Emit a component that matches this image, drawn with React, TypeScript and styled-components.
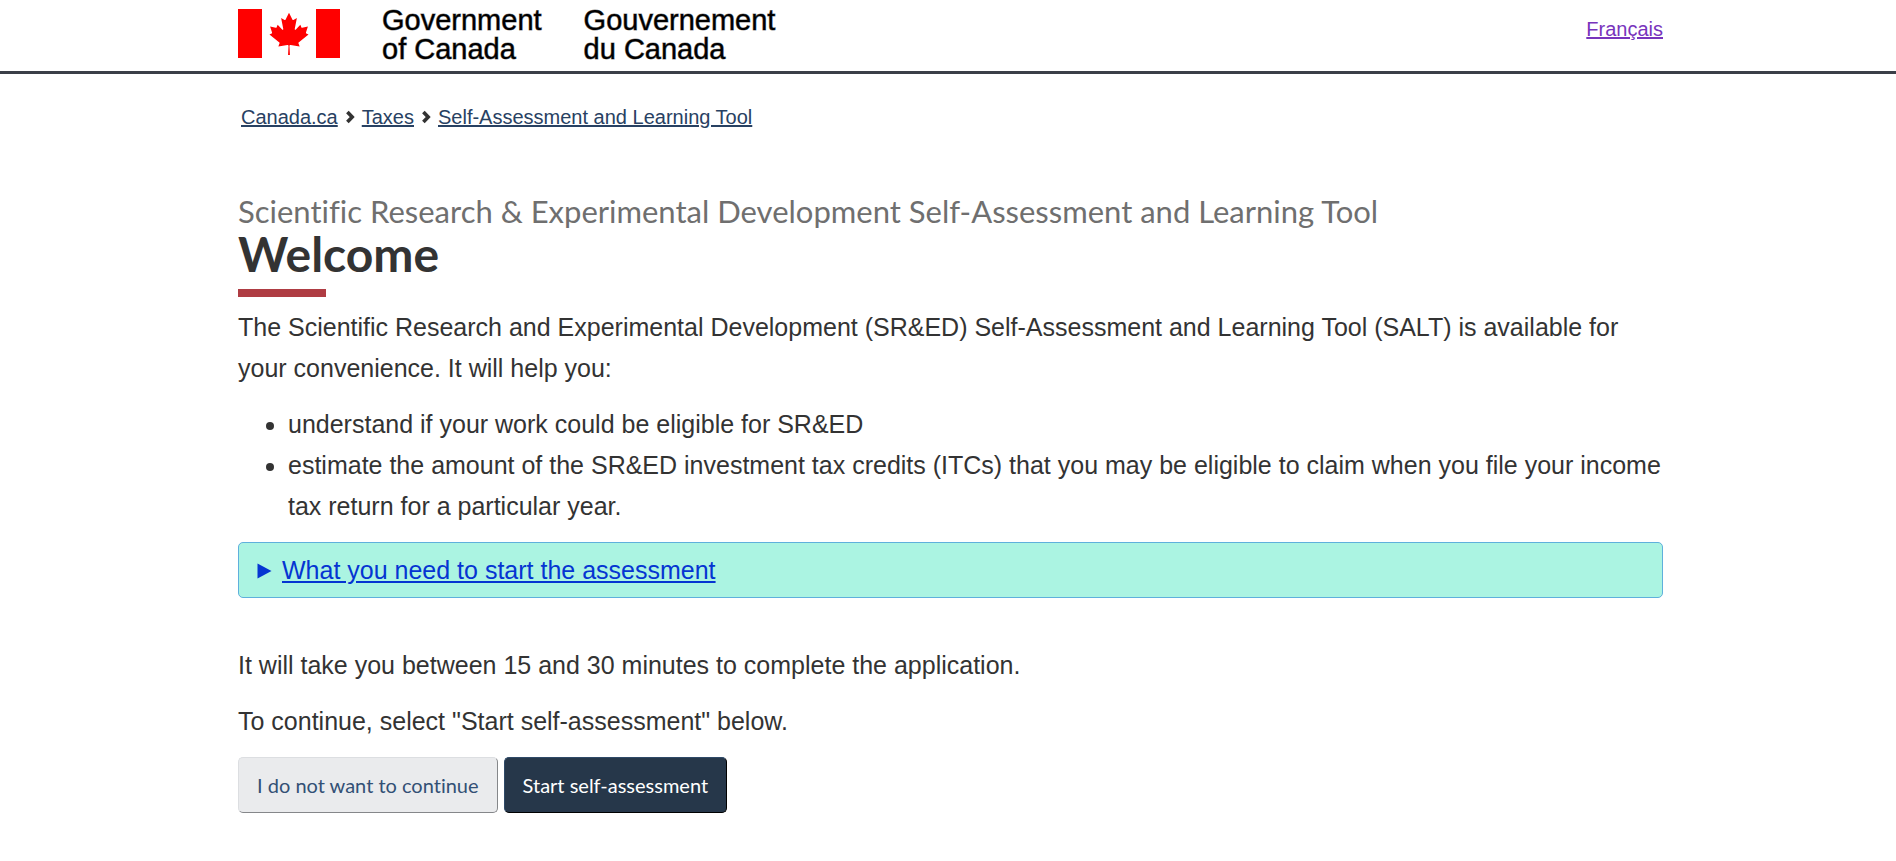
import React from "react";
import styled, { createGlobalStyle } from "styled-components";

const sans = `"Liberation Sans", Arial, Helvetica, sans-serif`;
const lato = `Lato, "Liberation Sans", sans-serif`;

const GlobalStyle = createGlobalStyle`
  *, *::before, *::after { box-sizing: border-box; }
  body {
    margin: 0;
    background: #fff;
    color: #333;
    font-family: ${sans};
    font-size: 25px;
    line-height: 41px;
  }
`;

const Page = styled.div`
  padding: 0 20px 48px 25px;
`;

const Container = styled.div`
  max-width: 1425px;
  margin: 0 auto;
`;

const Header = styled.header`
  margin: 0 -20px 0 -25px;
  padding: 0 20px 0 25px;
  border-bottom: 3px solid #3b3f48;
`;

const HeaderRow = styled(Container)`
  display: flex;
  justify-content: space-between;
  align-items: flex-start;
  padding: 6px 0 7px;
`;

const Brand = styled.a`
  display: flex;
  align-items: flex-start;
  gap: 42px;
  color: #000;
  text-decoration: none;
`;

const Flag = styled.svg`
  display: block;
  width: 102px;
  height: 49px;
  margin-top: 3px;
`;

const Wordmark = styled.span`
  font-size: 29px;
  line-height: 29px;
  -webkit-text-stroke: 1px rgba(0, 0, 0, 0.5);
`;

const LanguageLink = styled.a`
  padding-top: 11px;
  color: #7834bc;
  font-size: 20px;
  line-height: 24px;
`;

const Breadcrumb = styled.ol`
  display: flex;
  flex-wrap: wrap;
  align-items: center;
  margin: 0;
  padding: 28px 0 0 3px;
  list-style: none;
  font-size: 20px;
  line-height: 30px;
`;

const Crumb = styled.li`
  display: flex;
  align-items: center;

  a {
    color: #284162;
  }
`;

const Chevron = styled.svg`
  width: 9px;
  height: 14px;
  margin: 0 7px 0 8px;
`;

const Title = styled.h1`
  margin: 61px 0 10px;
  font-family: ${lato};
  font-size: 48px;
  font-weight: 700;
  line-height: 48px;

  &::after {
    content: "";
    display: block;
    width: 88px;
    height: 8px;
    margin-top: 11px;
    background: #af3c43;
  }
`;

const Subtitle = styled.span`
  display: block;
  color: #6f6f6f;
  font-size: 31px;
  font-weight: 400;
  line-height: 37px;
  font-variant-ligatures: none;
`;

const Text = styled.p`
  margin: 0 0 15px;
`;

const BulletList = styled.ul`
  margin: 0 0 15px;
  padding-left: 50px;
`;

const Expander = styled.details`
  margin-bottom: 47px;
  border: 1px solid #5fb0dc;
  border-radius: 5px;
  background: #abf4e2;

  &[open] summary svg {
    transform: rotate(90deg);
  }
`;

const Summary = styled.summary`
  display: flex;
  align-items: center;
  gap: 10px;
  padding: 7px 18px 6px;
  color: #0535d2;
  cursor: pointer;
  list-style: none;

  &::-webkit-details-marker {
    display: none;
  }

  span {
    text-decoration: underline;
  }
`;

const Marker = styled.svg`
  width: 15px;
  height: 16px;
  fill: currentColor;
`;

const Actions = styled.div`
  display: flex;
  flex-wrap: wrap;
  gap: 6px;
`;

const Button = styled.button<{ $primary?: boolean }>`
  padding: 12px 18px;
  border: 1px solid;
  border-color: ${(p) =>
    p.$primary ? "#2f4a68 #000 #000 #2f4a68" : "#dcdee1 #85878a #85878a #dcdee1"};
  border-radius: 5px;
  background: ${(p) => (p.$primary ? "#26374a" : "#eaebed")};
  color: ${(p) => (p.$primary ? "#fff" : "#335075")};
  font-family: ${lato};
  font-size: 20px;
  line-height: 30px;
  font-variant-ligatures: none;
  cursor: pointer;
`;

const crumbs = ["Canada.ca", "Taxes", "Self-Assessment and Learning Tool"];

export default function App() {
  return (
    <Page>
      <GlobalStyle />
      <Header>
        <HeaderRow>
          <Brand href="#" aria-label="Government of Canada / Gouvernement du Canada">
            <Flag viewBox="0 0 102 49" aria-hidden="true" fill="#f00">
              <path d="M0 0h24v49H0zM78 0h24v49H78z" />
              <path
                transform="translate(0.6 -0.4) scale(0.0105)"
                d="M4890 4430l-45-863a95 95 0 0 1 111-98l859 151-116-320a65 65 0 0 1 20-73l941-762-212-99a65 65 0 0 1-34-79l186-572-542 115a65 65 0 0 1-73-38l-105-247-423 454a65 65 0 0 1-111-57l204-1052-327 189a65 65 0 0 1-91-27l-332-652-332 652a65 65 0 0 1-91 27l-327-189 204 1052a65 65 0 0 1-111 57l-423-454-105 247a65 65 0 0 1-73 38l-542-115 186 572a65 65 0 0 1-34 79l-212 99 941 762a65 65 0 0 1 20 73l-116 320 859-151a95 95 0 0 1 111 98l-45 863z"
              />
            </Flag>
            <Wordmark>
              Government
              <br />
              of Canada
            </Wordmark>
            <Wordmark lang="fr">
              Gouvernement
              <br />
              du Canada
            </Wordmark>
          </Brand>
          <LanguageLink href="#" lang="fr">
            Français
          </LanguageLink>
        </HeaderRow>
      </Header>

      <Container>
        <nav aria-label="Breadcrumb">
          <Breadcrumb>
            {crumbs.map((crumb, i) => (
              <Crumb key={crumb}>
                {i > 0 && (
                  <Chevron viewBox="0 0 9 14" aria-hidden="true">
                    <path d="M1.4 2 6.2 7 1.4 12" fill="none" stroke="#333" strokeWidth="3.6" />
                  </Chevron>
                )}
                <a href="#">{crumb}</a>
              </Crumb>
            ))}
          </Breadcrumb>
        </nav>

        <main>
          <Title>
            <Subtitle>
              Scientific Research &amp; Experimental Development Self-Assessment and Learning Tool
            </Subtitle>
            Welcome
          </Title>
          <Text>
            The Scientific Research and Experimental Development (SR&amp;ED) Self-Assessment and
            Learning Tool (SALT) is available for your convenience. It will help you:
          </Text>
          <BulletList>
            <li>understand if your work could be eligible for SR&amp;ED</li>
            <li>
              estimate the amount of the SR&amp;ED investment tax credits (ITCs) that you may be
              eligible to claim when you file your income tax return for a particular year.
            </li>
          </BulletList>
          <Expander>
            <Summary>
              <Marker viewBox="0 0 15 16" aria-hidden="true">
                <path d="M0.5 0.5 14.5 8 0.5 15.5z" />
              </Marker>
              <span>What you need to start the assessment</span>
            </Summary>
          </Expander>
          <Text>It will take you between 15 and 30 minutes to complete the application.</Text>
          <Text>To continue, select "Start self-assessment" below.</Text>
          <Actions>
            <Button type="button">I do not want to continue</Button>
            <Button type="button" $primary>
              Start self-assessment
            </Button>
          </Actions>
        </main>
      </Container>
    </Page>
  );
}
